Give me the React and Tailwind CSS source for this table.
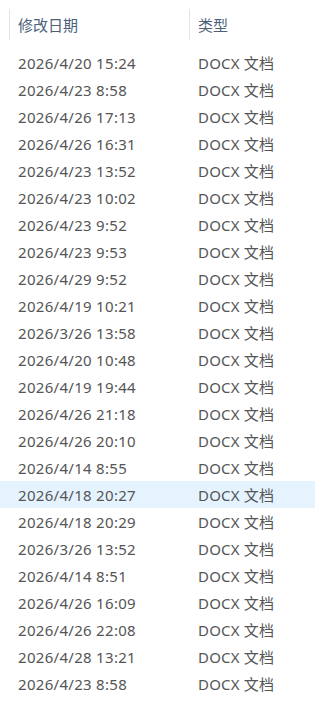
const rows = [
  "2026/4/20 15:24",
  "2026/4/23 8:58",
  "2026/4/26 17:13",
  "2026/4/26 16:31",
  "2026/4/23 13:52",
  "2026/4/23 10:02",
  "2026/4/23 9:52",
  "2026/4/23 9:53",
  "2026/4/29 9:52",
  "2026/4/19 10:21",
  "2026/3/26 13:58",
  "2026/4/20 10:48",
  "2026/4/19 19:44",
  "2026/4/26 21:18",
  "2026/4/26 20:10",
  "2026/4/14 8:55",
  "2026/4/18 20:27",
  "2026/4/18 20:29",
  "2026/3/26 13:52",
  "2026/4/14 8:51",
  "2026/4/26 16:09",
  "2026/4/26 22:08",
  "2026/4/28 13:21",
  "2026/4/23 8:58",
];

export default function App() {
  return (
    <div
      className="w-[315px] h-[709px] bg-white overflow-hidden text-[15px]"
      style={{ fontFamily: '"Noto Sans", "Noto Sans CJK SC", sans-serif' }}
    >
      {/* column headers */}
      <div className="flex pt-[9px] h-[49px]">
        <div className="ml-[9px] w-[180px] h-[31px] border-l border-[#e5e5e5] pl-[8px] flex items-center text-[#4c607a] pt-[1px]">
          修改日期
        </div>
        <div className="w-[126px] h-[31px] border-l border-[#e5e5e5] pl-[8px] flex items-center text-[#4c607a] pt-[1px]">
          类型
        </div>
      </div>

      {/* rows */}
      <div className="flex flex-col">
        {rows.map((d, i) => (
          <div
            key={i}
            className={
              "flex h-[27px] items-center text-[#555] pt-[1px] " +
              (i === 16 ? "bg-[#e5f3ff]" : "")
            }
          >
            <div className="w-[198px] pl-[18px] tracking-[0.3px]">{d}</div>
            <div className="tracking-[0.2px]">DOCX 文档</div>
          </div>
        ))}
      </div>
    </div>
  );
}
